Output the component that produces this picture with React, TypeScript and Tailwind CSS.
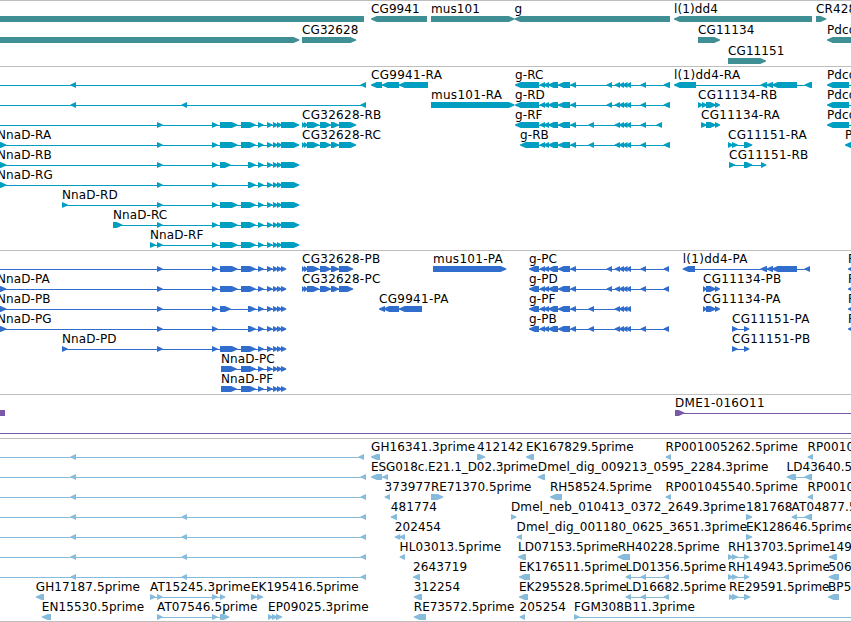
type Strand = '+' | '-'
type Span = [number, number]

interface Feature {
  label?: string
  strand: Strand
  blocks: Span[]
  // intron line, when it runs past the first / last block
  line?: Span
}

interface TrackData {
  id: string
  color: string
  rowClass: string
  padClass: string
  rows: Feature[][]
}

const WIDTH = 851
const HEAD = 5.7

const plus = (label: string, ...blocks: Span[]): Feature => ({ label, strand: '+', blocks })
const minus = (label: string, ...blocks: Span[]): Feature => ({ label, strand: '-', blocks })

// Exons shared between isoforms
const nnaStart: Span[] = [[157, 162.6], [212, 217.6]]
const nnaLong: Span[] = [[220, 237.5], [241, 255.7]]
const nnaShort: Span[] = [[220, 230.6], [248, 255.7]]
const nnaSkip: Span[] = [[248, 255.7]]
const nnaMid: Span[] = [[258, 263.6], [267, 272.6], [273, 278], [277, 282]]
const rnaEnd: Span[] = [...nnaMid, [281, 299.3]]
const pepEnd: Span[] = [...nnaMid, [281, 286.3]]
const nnaLeft: Span = [-6, 6.3]

const cg32628: Span[] = [[302, 305], [304, 308], [307, 319], [320, 331], [331, 339]]
const gHead: Span[] = [[539.7, 545], [543.5, 549], [548, 558], [558, 570], [570.3, 576]]
const gFour: Span[] = [[614.7, 620], [619, 624], [622.5, 627.5], [626, 631]]
const gC: Span[] = [...gHead, [606.7, 612], ...gFour, [640.6, 646]]
const gF: Span[] = [...gHead, [588.5, 594], ...gFour]
const dd4: Span[] = [[760.6, 767], [766.6, 773], [772, 797]]

const longLine = (label: string | undefined, blocks: Span[], end: number): Feature => ({
  label,
  strand: '+',
  blocks,
  line: [-10, end],
})
const reverseLine = (blocks: Span[], end = 366): Feature => ({ strand: '-', blocks, line: [-10, end] })

const one: Span[] = [[70.6, 76], [360.6, 366]]
const two: Span[] = [[70.6, 76], [181.6, 187], [360.6, 366]]

const pdcd: Feature = { label: 'Pdcd4', strand: '-', blocks: [[827, 849]], line: [829, 860] }
const pdcdPep: Feature = { label: 'Pdcd4', strand: '-', blocks: [[848, 860]] }

const tracks: TrackData[] = [
  {
    id: 'gene',
    color: '#408f94',
    rowClass: 'h-[21px]',
    padClass: 'pb-0.5',
    rows: [
      [
        { strand: '-', blocks: [[-10, 364]] },
        minus('CG9941', [371, 427]),
        plus('mus101', [431, 514.5]),
        minus('g', [514.5, 670]),
        minus('l(1)dd4', [674, 812]),
        plus('CR428', [816, 826.3]),
      ],
      [
        { strand: '+', blocks: [[-10, 299.3]] },
        plus('CG32628', [302, 356.2]),
        plus('CG11134', [698, 720]),
        minus('Pdcd4', [827, 860]),
      ],
      [plus('CG11151', [728, 766])],
    ],
  },
  {
    id: 'transcript',
    color: '#009ec1',
    rowClass: 'h-5',
    padClass: 'pb-[3px]',
    rows: [
      [
        reverseLine(one),
        minus('CG9941-RA', [371, 382], [382, 399], [399, 428]),
        minus('g-RC', [515, 539], ...gC, [663.6, 670]),
        minus('l(1)dd4-RA', [674, 696], ...dd4, [804.6, 812]),
        pdcd,
      ],
      [
        reverseLine(two),
        plus('mus101-RA', [431, 514.5]),
        minus('g-RD', [515, 539], ...gC, [663.6, 670]),
        plus('CG11134-RB', [698, 703], [702, 707], [706, 716], [715, 720]),
        pdcd,
      ],
      [
        longLine(undefined, [...nnaStart, ...nnaLong, ...rnaEnd], 297),
        plus('CG32628-RB', ...cg32628, [339, 356.2]),
        minus('g-RF', [515, 539], ...gF, [640.6, 646], [656.6, 662]),
        plus('CG11134-RA', [701, 706.5], [706, 716], [715, 720]),
        pdcd,
      ],
      [
        longLine('NnaD-RA', [nnaLeft, ...nnaStart, ...nnaLong, ...rnaEnd], 297),
        plus('CG32628-RC', ...cg32628, [339, 356.2]),
        minus('g-RB', [520, 539], ...gF, [640.6, 646], [663.6, 670]),
        plus('CG11151-RA', [728, 733], [732, 737.7], [744, 752.3]),
        minus('Pdcd4', [845, 860]),
      ],
      [
        longLine('NnaD-RB', [nnaLeft, ...nnaStart, ...nnaShort, ...rnaEnd], 297),
        plus('CG11151-RB', [729, 735], [744, 752.3], [761, 766.3]),
      ],
      [longLine('NnaD-RG', [nnaLeft, ...nnaStart, ...nnaSkip, ...rnaEnd], 297)],
      [plus('NnaD-RD', [62, 67.6], ...nnaStart, ...nnaLong, ...rnaEnd)],
      [plus('NnaD-RC', [113, 122.3], ...nnaStart, ...nnaLong, ...rnaEnd)],
      [plus('NnaD-RF', [150, 155.6], ...nnaStart, ...nnaLong, ...rnaEnd)],
    ],
  },
  {
    id: 'peptide',
    color: '#316dcc',
    rowClass: 'h-5',
    padClass: 'pb-[3px]',
    rows: [
      [
        longLine(undefined, [...nnaStart, ...nnaLong, ...pepEnd], 285),
        plus('CG32628-PB', ...cg32628, [339, 353.2]),
        plus('mus101-PA', [433, 506.3]),
        minus('g-PC', [529, 539], ...gC, [663.6, 669]),
        minus('l(1)dd4-PA', [682.7, 695], ...dd4, [804.6, 810]),
        pdcdPep,
      ],
      [
        longLine('NnaD-PA', [nnaLeft, ...nnaStart, ...nnaLong, ...pepEnd], 285),
        plus('CG32628-PC', ...cg32628, [339, 353.2]),
        minus('g-PD', [529, 539], ...gC, [663.6, 669]),
        plus('CG11134-PB', [703, 707], [706, 716], [715, 720]),
        pdcdPep,
      ],
      [
        longLine('NnaD-PB', [nnaLeft, ...nnaStart, ...nnaShort, ...pepEnd], 285),
        minus('CG9941-PA', [379, 385], [383.5, 399], [399, 422]),
        minus('g-PF', [529, 539], ...gF),
        plus('CG11134-PA', [703, 707], [706, 716], [715, 720]),
        pdcdPep,
      ],
      [
        longLine('NnaD-PG', [nnaLeft, ...nnaStart, ...nnaSkip, ...pepEnd], 285),
        minus('g-PB', [529, 539], ...gF, [640.6, 646], [663.6, 669]),
        plus('CG11151-PA', [732, 737.6], [744, 749.3]),
        pdcdPep,
      ],
      [
        plus('NnaD-PD', [62, 67.6], ...nnaStart, ...nnaLong, ...pepEnd),
        plus('CG11151-PB', [732, 737.6], [744, 749.3]),
      ],
      [plus('NnaD-PC', [221, 236.7], [241, 255.7], ...pepEnd)],
      [plus('NnaD-PF', [221, 236.7], [241, 255.7], ...pepEnd)],
    ],
  },
  {
    id: 'bac',
    color: '#7759a8',
    rowClass: 'h-5',
    padClass: 'pb-[3px]',
    rows: [
      [
        { strand: '-', blocks: [[-10, 5]] },
        { label: 'DME1-016O11', strand: '+', blocks: [[675, 684.3]], line: [675, 860] },
      ],
      [{ strand: '+', blocks: [], line: [-10, 860] }],
    ],
  },
  {
    id: 'est',
    color: '#87bbdc',
    rowClass: 'h-5',
    padClass: 'pb-0.5',
    rows: [
      [
        reverseLine([[70.6, 76], [358.6, 364]], 364),
        minus('GH16341.3prime', [371, 380]),
        plus('412142', [477, 485.3]),
        minus('EK167829.5prime', [526, 534]),
        minus('RP001005262.5prime', [665.6, 671]),
        minus('RP0010', [807.6, 813]),
      ],
      [
        reverseLine(one),
        minus('ESG018c.E21.1_D02.3prime', [371, 382], [382.4, 388]),
        minus('Dmel_dig_009213_0595_2284.3prime', [537.8, 545]),
        minus('LD43640.5prime', [786.6, 796], [804.3, 812]),
      ],
      [
        reverseLine(one),
        minus('373977', [384.6, 390]),
        plus('RE71370.5prime', [431, 443.3]),
        minus('RH58524.5prime', [550, 562]),
        minus('RP001045540.5prime', [665.6, 671]),
        minus('RP0010', [807.6, 813]),
      ],
      [
        reverseLine(two),
        minus('481774', [390.7, 397]),
        plus('Dmel_neb_010413_0372_2649.3prime', [511, 516.4]),
        plus('181768', [746, 752.2]),
        minus('AT04877.5prime', [791.6, 797], [804.3, 812]),
      ],
      [
        reverseLine(two),
        minus('202454', [394.7, 400.3], [399.6, 405]),
        minus('Dmel_dig_001180_0625_3651.3prime', [516.6, 522]),
        plus('EK128646.5prime', [746, 752.2]),
      ],
      [
        reverseLine(two),
        minus('HL03013.5prime', [399.6, 405]),
        minus('LD07153.5prime', [518, 526]),
        minus('RH40228.5prime', [617.7, 630]),
        plus('RH13703.5prime', [728, 733], [732, 737.6], [744, 749.3]),
        minus('149', [828.8, 837]),
      ],
      [
        reverseLine(two),
        minus('2643719', [413, 420]),
        minus('EK176511.5prime', [519, 530]),
        minus('LD01356.5prime', [625.6, 631], [640.6, 646], [663.6, 669]),
        plus('RH14943.5prime', [728, 733], [732, 737.6], [744, 749.3]),
        minus('506', [828.6, 839]),
      ],
      [
        minus('GH17187.5prime', [35.8, 44]),
        plus('AT15245.3prime', [150, 155.6], ...nnaStart, [220, 225.3]),
        plus('EK195416.5prime', [251, 257], [257, 263.2]),
        minus('312254', [413.8, 422]),
        minus('EK295528.5prime', [519, 528]),
        minus('LD16682.5prime', [625.6, 631], [640.6, 646], [663.6, 669]),
        plus('RE29591.5prime', [729, 733.5], [732, 738.3], [744, 750.3]),
        minus('BP5', [828, 839]),
      ],
      [
        minus('EN15530.5prime', [41.8, 51]),
        plus('AT07546.5prime', ...nnaStart, [220, 229.3]),
        plus('EP09025.3prime', [268, 273], [272, 277.5], [276, 282.2]),
        minus('RE73572.5prime', [413.8, 426]),
        minus('205254', [519.6, 525]),
        { label: 'FGM308B11.3prime', strand: '+', blocks: [[574, 579.6]], line: [574, 860] },
      ],
    ],
  },
]

// Box with a slightly rounded arrow head at the 3' end
function arrow([start, end]: Span, strand: Strand) {
  const head = Math.min(HEAD, end - start)
  const tail = strand === '+' ? start : end
  const tip = strand === '+' ? end : start
  const dir = strand === '+' ? -1 : 1
  const neck = tip + dir * head
  const mid = tip + dir * head * 0.4
  return `${tail},0 ${neck},0 ${mid},1.5 ${tip},2.6 ${tip},3.6 ${mid},4.6 ${neck},6 ${tail},6`
}

function labelLeft(feature: Feature) {
  const x = feature.blocks[0][0]
  return x < 0 ? -3 : x
}

function labelTracking(label: string) {
  if (label.startsWith('ESG')) return 'tracking-[-0.1px]'
  if (/\d.*-/.test(label)) return 'tracking-[0.28px]'
  if (/^(EK|RH|RE|LD)\d+\.5/.test(label)) return 'tracking-normal'
  return 'tracking-[0.1px]'
}

function Row({ features, color, className }: { features: Feature[]; color: string; className: string }) {
  return (
    <div className={`relative shrink-0 pt-[15px] ${className}`}>
      <svg width={WIDTH} height={6} viewBox={`0 0 ${WIDTH} 6`} fill={color} className="block">
        {features.map((f, i) => {
          const from = f.line ? f.line[0] : f.blocks[0][0] + 2
          const to = f.line ? f.line[1] : f.blocks[f.blocks.length - 1][1] - 2
          return (
            <g key={i}>
              {(f.line || f.blocks.length > 1) && <rect x={from} y={3} width={to - from} height={1} />}
              {f.blocks.map((b, j) => (
                <polygon key={j} points={arrow(b, f.strand)} />
              ))}
            </g>
          )
        })}
      </svg>
      {features.map(
        (f, i) =>
          f.label && (
            <span
              key={i}
              className={`absolute top-px whitespace-nowrap text-[12px] leading-[15px] text-black ${labelTracking(f.label)}`}
              style={{ left: labelLeft(f) }}
            >
              {f.label}
            </span>
          ),
      )}
    </div>
  )
}

export default function App() {
  return (
    <main className="flex h-[622px] w-[851px] flex-col overflow-hidden border-b border-[#bebebe] bg-white font-['DejaVu_Sans',sans-serif]">
      {tracks.map((track) => (
        <section key={track.id} className={`flex flex-col border-t border-[#bebebe] ${track.padClass}`}>
          {track.rows.map((features, i) => (
            <Row key={i} features={features} color={track.color} className={track.rowClass} />
          ))}
        </section>
      ))}
    </main>
  )
}
